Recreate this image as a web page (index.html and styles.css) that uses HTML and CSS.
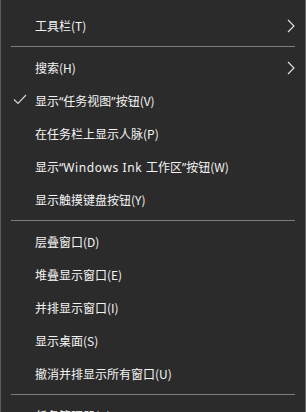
FILE: index.html
```html
<!DOCTYPE html>
<html lang="zh-CN">
<head>
  <meta charset="UTF-8">
  <meta name="viewport" content="width=device-width, initial-scale=1.0">
  <title>任务栏菜单</title>
  <link rel="stylesheet" href="styles.css">
</head>
<body>
  <div class="menu">
    <div class="item">
      <span class="mark"></span>
      <span class="label">工具栏(T)</span>
      <svg class="arrow" width="8" height="14" viewBox="0 0 8 14"><polyline points="1,1 7,7 1,13" fill="none" stroke="#e6e6e6" stroke-width="1.1"/></svg>
    </div>
    <div class="sep"></div>
    <div class="item">
      <span class="mark"></span>
      <span class="label">搜索(H)</span>
      <svg class="arrow" width="8" height="14" viewBox="0 0 8 14"><polyline points="1,1 7,7 1,13" fill="none" stroke="#e6e6e6" stroke-width="1.1"/></svg>
    </div>
    <div class="item">
      <span class="mark">
        <svg width="14" height="11" viewBox="0 0 14 11"><polyline points="1,5.5 5,9.5 13,1" fill="none" stroke="#d8d8d8" stroke-width="1.1"/></svg>
      </span>
      <span class="label">显示<span class="q">“</span>任务视图<span class="q">”</span>按钮(V)</span>
    </div>
    <div class="item">
      <span class="mark"></span>
      <span class="label">在任务栏上显示人脉(P)</span>
    </div>
    <div class="item">
      <span class="mark"></span>
      <span class="label">显示<span class="q">“</span><span class="latin">Windows Ink </span>工作区<span class="q">”</span>按钮(W)</span>
    </div>
    <div class="item">
      <span class="mark"></span>
      <span class="label">显示触摸键盘按钮(Y)</span>
    </div>
    <div class="sep"></div>
    <div class="item">
      <span class="mark"></span>
      <span class="label">层叠窗口(D)</span>
    </div>
    <div class="item">
      <span class="mark"></span>
      <span class="label">堆叠显示窗口(E)</span>
    </div>
    <div class="item">
      <span class="mark"></span>
      <span class="label">并排显示窗口(I)</span>
    </div>
    <div class="item">
      <span class="mark"></span>
      <span class="label">显示桌面(S)</span>
    </div>
    <div class="item">
      <span class="mark"></span>
      <span class="label">撤消并排显示所有窗口(U)</span>
    </div>
    <div class="sep"></div>
    <div class="item">
      <span class="mark"></span>
      <span class="label">任务管理器(K)</span>
    </div>
  </div>
</body>
</html>
```

FILE: styles.css
```css
html, body {
  margin: 0;
  height: 100%;
  overflow: hidden;
  background: #2b2b2b;
}
.menu {
  box-sizing: border-box;
  width: 306px;
  min-height: 100%;
  padding-top: 9px;
  background: #2b2b2b;
  border-left: 1px solid #5c5c5c;
  border-right: 1px solid #6a6a6a;
  font-family: "Noto Sans CJK SC", "Noto Sans", sans-serif;
  font-size: 12px;
  color: #f4f4f4;
}
.item {
  display: flex;
  align-items: center;
  height: 33px;
  padding-right: 10px;
}
.mark {
  display: flex;
  align-items: center;
  justify-content: center;
  width: 34px;
  flex: none;
  padding-left: 4px;
  box-sizing: border-box;
}
.mark svg {
  display: block;
  margin-top: -2px;
}
.label {
  flex: 1;
  white-space: nowrap;
}
.q {
  font-family: "Noto Sans", sans-serif;
}
.latin {
  font-family: "Noto Sans", sans-serif;
  letter-spacing: 0.6px;
}
.arrow {
  display: block;
  flex: none;
}
.sep {
  height: 1px;
  margin: 4px 10px 4px 10px;
  background: #7d7d7d;
}
```
